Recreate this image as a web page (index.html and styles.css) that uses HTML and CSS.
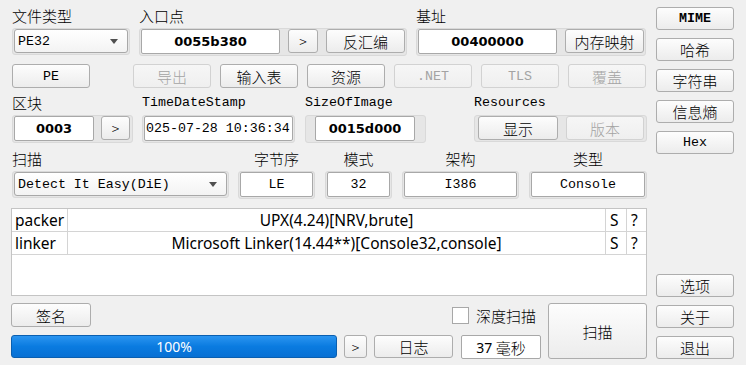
FILE: index.html
```html
<!DOCTYPE html>
<html>
<head>
<meta charset="utf-8">
<title>Detect It Easy</title>
<link rel="stylesheet" href="styles.css">
</head>
<body>
<div class="app">
  <div class="main">
    <div class="row row-a">
      <div class="grp g-ftype">
        <div class="lbl zh">文件类型</div>
        <div class="frame">
          <div class="combo w-ftype"><span class="en">PE32</span><i class="arrow"></i></div>
        </div>
      </div>
      <div class="grp g-ep">
        <div class="lbl zh">入口点</div>
        <div class="frame">
          <div class="field num w-addr">0055b380</div>
          <button class="btn gt w-go">&gt;</button>
          <button class="btn zh w-79">反汇编</button>
        </div>
      </div>
      <div class="grp g-base">
        <div class="lbl zh">基址</div>
        <div class="frame">
          <div class="field num w-addr">00400000</div>
          <button class="btn zh w-79">内存映射</button>
        </div>
      </div>
    </div>

    <div class="row row-b">
      <button class="btn en w-pe">PE</button>
      <button class="btn zh dis w-78 first">导出</button>
      <button class="btn zh w-78">输入表</button>
      <button class="btn zh w-78">资源</button>
      <button class="btn en dis w-78">.NET</button>
      <button class="btn en dis w-78">TLS</button>
      <button class="btn zh dis w-78">覆盖</button>
    </div>

    <div class="row row-c">
      <div class="grp g-sec">
        <div class="lbl zh">区块</div>
        <div class="frame f-sec">
          <div class="field num w-sec">0003</div>
          <button class="btn gt w-29">&gt;</button>
        </div>
      </div>
      <div class="grp g-tds">
        <div class="lbl en">TimeDateStamp</div>
        <div class="frame">
          <div class="field en left w-tds">025-07-28 10:36:34</div>
        </div>
      </div>
      <div class="grp g-size">
        <div class="lbl en">SizeOfImage</div>
        <div class="frame f-size">
          <div class="field num w-size">0015d000</div>
        </div>
      </div>
      <div class="grp g-res">
        <div class="lbl en">Resources</div>
        <div class="frame f-res">
          <button class="btn zh w-80">显示</button>
          <button class="btn zh dis w-78">版本</button>
        </div>
      </div>
    </div>

    <div class="row row-d">
      <div class="grp g-scan">
        <div class="lbl zh">扫描</div>
        <div class="frame">
          <div class="combo w-scan"><span class="en">Detect It Easy(DiE)</span><i class="arrow"></i></div>
        </div>
      </div>
      <div class="grp g-end center">
        <div class="lbl zh">字节序</div>
        <div class="frame"><div class="field en w-end">LE</div></div>
      </div>
      <div class="grp g-mode center">
        <div class="lbl zh">模式</div>
        <div class="frame"><div class="field en w-mode">32</div></div>
      </div>
      <div class="grp g-arch center">
        <div class="lbl zh">架构</div>
        <div class="frame"><div class="field en w-arch">I386</div></div>
      </div>
      <div class="grp g-kind center">
        <div class="lbl zh">类型</div>
        <div class="frame"><div class="field en w-kind">Console</div></div>
      </div>
    </div>

    <div class="result">
      <div class="trow">
        <div class="c1">packer</div>
        <div class="c2">UPX(4.24)[NRV,brute]</div>
        <div class="c3">S</div>
        <div class="c4">?</div>
      </div>
      <div class="trow">
        <div class="c1">linker</div>
        <div class="c2">Microsoft Linker(14.44**)[Console32,console]</div>
        <div class="c3">S</div>
        <div class="c4">?</div>
      </div>
    </div>

    <div class="bottom">
      <div class="bl">
        <div class="bl-top">
          <button class="btn zh w-80">签名</button>
          <span class="check"></span>
          <span class="zh check-lbl">深度扫描</span>
        </div>
        <div class="bl-bot">
          <div class="progress"><span>100%</span></div>
          <button class="btn gt w-23">&gt;</button>
          <button class="btn zh w-79">日志</button>
          <div class="field w-80 time"><span class="ui2">37</span>&nbsp;<span class="zh">毫秒</span></div>
        </div>
      </div>
      <button class="btn zh big">扫描</button>
    </div>
  </div>

  <div class="side">
    <button class="btn en bold">MIME</button>
    <button class="btn zh">哈希</button>
    <button class="btn zh">字符串</button>
    <button class="btn zh">信息熵</button>
    <button class="btn en">Hex</button>
    <button class="btn zh push">选项</button>
    <button class="btn zh">关于</button>
    <button class="btn zh">退出</button>
  </div>
</div>
</body>
</html>
```

FILE: styles.css
```css
* { box-sizing: border-box; margin: 0; padding: 0; }

body {
  background: #f0f0f0;
  width: 746px;
  height: 365px;
  overflow: hidden;
  color: #000;
  font-family: "Noto Sans CJK SC", sans-serif;
}

.zh { font-family: "Noto Sans CJK SC", sans-serif; font-size: 15px; font-weight: 300; }
.en { font-family: "Liberation Mono", monospace; font-size: 13.3px; }
.gt { font-family: "Noto Sans CJK SC", sans-serif; font-size: 14px; font-weight: 300; }
.num { font-family: "DejaVu Sans", sans-serif; font-size: 13px; font-weight: bold; }
.ui2 { font-family: "Noto Sans", sans-serif; font-size: 14px; }
.bold { font-weight: bold; }

.app { display: flex; }

.main {
  width: 647px;
  display: flex;
  flex-direction: column;
}

.side {
  width: 78px;
  height: 365px;
  margin-left: 9px;
  padding: 7px 0 6px;
  display: flex;
  flex-direction: column;
  gap: 8px;
}
.side .btn { height: 23px; width: 78px; }
.side .push { margin-top: auto; }

.row { display: flex; }
.row-a { padding-top: 6px; }
.row-b { margin-top: 8px; padding-left: 12px; gap: 9px; }
.row-c { margin-top: 5px; }
.row-d { margin-top: 6px; }

.grp { display: flex; flex-direction: column; }
.grp.center { align-items: center; }

.lbl {
  height: 20px;
  line-height: 20px;
  margin-bottom: 2px;
  white-space: nowrap;
}

.frame {
  display: flex;
  gap: 8px;
  background: #e6e6e6;
  border: 1px solid #d9d9d9;
  border-radius: 3px;
  padding: 0 1px 1px;
  align-items: flex-start;
}

.field {
  height: 25px;
  background: #fff;
  border: 1px solid #a8a8a8;
  border-radius: 2px;
  display: flex;
  align-items: center;
  justify-content: center;
  white-space: nowrap;
  overflow: hidden;
}
.field.left { justify-content: flex-start; padding-left: 1px; }

.btn {
  height: 24px;
  border: 1px solid #adadad;
  border-radius: 3px;
  background: linear-gradient(#fdfdfd, #ececec);
  display: flex;
  align-items: center;
  justify-content: center;
  color: #000;
  white-space: nowrap;
  cursor: default;
}
.btn.dis {
  border-color: #d2d2d2;
  background: linear-gradient(#f6f6f6, #efefef);
  color: #a3a3a3;
}

.combo {
  height: 24px;
  border: 1px solid #a8a8a8;
  border-radius: 3px;
  background: linear-gradient(#ffffff, #f3f3f3);
  display: flex;
  align-items: center;
  justify-content: space-between;
  padding: 0 9px 0 3px;
}
.arrow {
  width: 0;
  height: 0;
  border-style: solid;
  border-width: 5px 4.5px 0;
  border-color: #505050 transparent transparent;
}

/* widths */
.w-ftype { width: 114px; }
.w-addr { width: 139px; }
.w-go { width: 30px; }
.w-79 { width: 79px; }
.w-78 { width: 78px; }
.w-80 { width: 80px; }
.w-pe { width: 78px; }
.w-29 { width: 29px; }
.w-23 { width: 23px; }
.w-sec { width: 80px; }
.w-tds { width: 149px; }
.w-size { width: 100px; }
.w-scan { width: 213px; }
.w-end { width: 73px; }
.w-mode { width: 63px; }
.w-arch { width: 113px; }
.w-kind { width: 114px; }

.first { margin-left: 34px; }

/* group placement */
.g-ftype { margin-left: 12px; }
.g-ep { margin-left: 9px; }
.g-base { margin-left: 9px; }

.g-sec { margin-left: 12px; }
.f-sec { gap: 7px; padding-right: 2px; }
.g-tds { margin-left: 9px; }
.g-size { margin-left: 10px; }
.f-size { padding: 0 10px 1px 9px; }
.g-res { margin-left: 48px; }
.f-res { padding: 0 2px 1px 3px; }

.g-scan { margin-left: 12px; }
.g-end { margin-left: 9px; }
.g-mode { margin-left: 10px; }
.g-arch { margin-left: 10px; }
.g-kind { margin-left: 10px; }

/* result table */
.result {
  margin-top: 9px;
  margin-left: 11px;
  width: 636px;
  height: 88px;
  background: #fff;
  border: 1px solid #c4c4c4;
  font-family: "Noto Sans", sans-serif;
  font-size: 15.5px;
}
.trow {
  display: grid;
  grid-template-columns: 56px 538px 21px 1fr;
  height: 23px;
  border-bottom: 1px solid #d4d4d4;
  line-height: 22px;
}
.trow > div { border-right: 1px solid #d4d4d4; white-space: nowrap; overflow: hidden; }
.trow > div:last-child { border-right: none; }
.c1 { padding-left: 3px; }
.c2 { text-align: center; }
.c3 { padding-left: 4px; }
.c4 { padding-left: 4px; }

/* bottom */
.bottom { display: flex; margin-top: 7px; }
.bl {
  margin-left: 11px;
  width: 530px;
  display: flex;
  flex-direction: column;
  gap: 8px;
}
.bl-top { display: flex; align-items: center; height: 24px; }
.check {
  width: 17px;
  height: 17px;
  margin-left: 361px;
  background: #fff;
  border: 1px solid #a8a8a8;
}
.check-lbl { margin-left: 7px; }

.bl-bot { display: flex; gap: 7px; height: 23px; }
.bl-bot .btn { height: 23px; }
.bl-bot .w-79 { margin-right: 1px; }
.time { height: 24px; }

.progress {
  width: 326px;
  height: 23px;
  border: 1px solid #0a5fb0;
  border-radius: 3px;
  background: linear-gradient(#2b95f0, #0a7be0 50%, #0870d4);
  color: #fff;
  font-family: "Noto Sans", sans-serif;
  font-size: 14px;
  display: flex;
  align-items: center;
  justify-content: center;
}

.big {
  margin-left: 7px;
  width: 99px;
  height: 56px;
}
```
